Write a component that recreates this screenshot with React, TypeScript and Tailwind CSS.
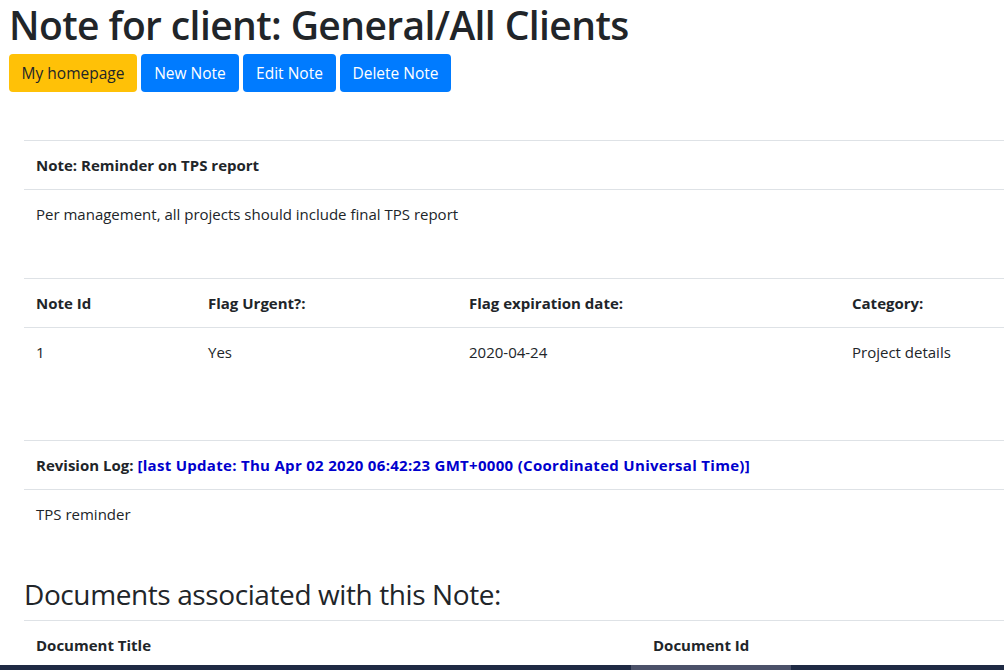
import React from 'react';

const line = 'border-t border-[#dee2e6]';

function Row({ cols, children, bold }: { cols: string; children: React.ReactNode; bold?: boolean }) {
  return (
    <div className={`grid ${cols} ${line} ${bold ? 'font-bold' : ''}`}>{children}</div>
  );
}

function Cell({ children }: { children: React.ReactNode }) {
  return <div className="p-3 leading-6 whitespace-nowrap">{children}</div>;
}

export default function App() {
  return (
    <div className="w-[1004px] h-[670px] overflow-hidden bg-white text-[#212529] font-['Open_Sans',sans-serif] text-[15px] flex flex-col">
      <div className="px-[9px] pt-px shrink-0">
        <h1 className="text-[39px] leading-[48px] font-semibold tracking-[-0.6px] m-0">Note for client: General/All Clients</h1>
        <div className="flex gap-1 mt-[5px]">
          <button className="bg-[#ffc107] text-[#212529] w-[128px] h-[38px] pt-px rounded text-[15.5px]">My homepage</button>
          <button className="bg-[#007bff] text-white w-[98px] h-[38px] pt-px rounded text-[15.5px]">New Note</button>
          <button className="bg-[#007bff] text-white w-[93px] h-[38px] pt-px rounded text-[15.5px]">Edit Note</button>
          <button className="bg-[#007bff] text-white w-[111px] h-[38px] pt-px rounded text-[15.5px]">Delete Note</button>
        </div>
      </div>

      <div className="pl-6 flex-1 min-h-0 overflow-hidden">
        <div className="mt-[48px]">
          <Row cols="grid-cols-1" bold>
            <Cell>Note: Reminder on TPS report</Cell>
          </Row>
          <Row cols="grid-cols-1">
            <Cell>Per management, all projects should include final TPS report</Cell>
          </Row>
        </div>

        <div className="mt-[40px]">
          <Row cols="grid-cols-[172px_261px_383px_1fr]" bold>
            <Cell>Note Id</Cell>
            <Cell>Flag Urgent?:</Cell>
            <Cell>Flag expiration date:</Cell>
            <Cell>Category:</Cell>
          </Row>
          <Row cols="grid-cols-[172px_261px_383px_1fr]">
            <Cell>1</Cell>
            <Cell>Yes</Cell>
            <Cell>2020-04-24</Cell>
            <Cell>Project details</Cell>
          </Row>
        </div>

        <div className="mt-[64px]">
          <Row cols="grid-cols-1" bold>
            <Cell>
              Revision Log:{' '}
              <span className="text-[#0000cd] tracking-[0.3px]">[last Update: Thu Apr 02 2020 06:42:23 GMT+0000 (Coordinated Universal Time)]</span>
            </Cell>
          </Row>
          <Row cols="grid-cols-1">
            <Cell>TPS reminder</Cell>
          </Row>
        </div>

        <h3 className="text-[28px] leading-[1.2] font-medium tracking-[-0.4px] mt-[40px] mb-2">Documents associated with this Note:</h3>
        <Row cols="grid-cols-[617px_1fr]" bold>
          <Cell>Document Title</Cell>
          <Cell>Document Id</Cell>
        </Row>
      </div>

      <div className="h-[5px] bg-[#1f2a44] flex shrink-0">
        <div className="w-[631px]" />
        <div className="w-[160px] bg-[#4b5169]" />
      </div>
    </div>
  );
}
